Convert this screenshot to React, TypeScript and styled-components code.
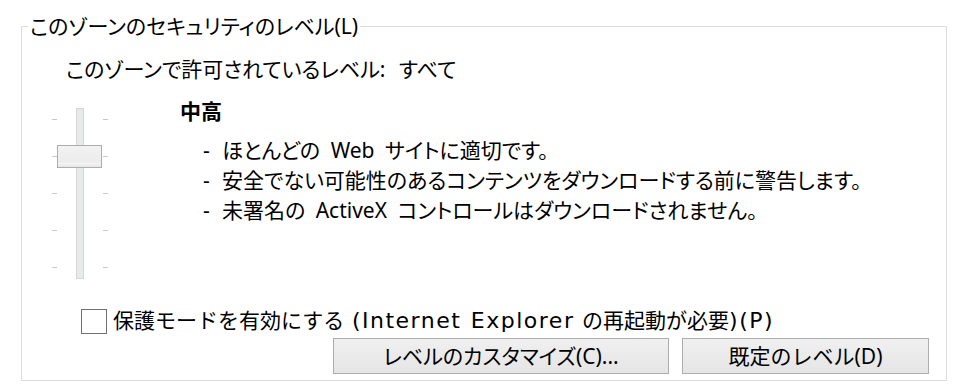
import React from "react";
import styled, { createGlobalStyle } from "styled-components";

const Global = createGlobalStyle`
  html, body { margin: 0; padding: 0; background: #ffffff; }
  body {
    font-family: "Noto Sans", "Noto Sans CJK JP", sans-serif;
    font-size: 21px;
    font-feature-settings: "palt";
    word-spacing: 5px;
    color: #000;
  }
`;

const Page = styled.div`
  width: 956px;
  height: 385px;
  padding-top: 12px;
  box-sizing: border-box;
`;

const Group = styled.fieldset`
  margin: 0 9px 0 21px;
  padding: 0 17px 6px 0;
  border: 1px solid #dcdcdc;
  min-inline-size: 0;
  height: 369px;
  box-sizing: border-box;
  display: flex;
  flex-direction: column;
`;

const Legend = styled.legend`
  margin-left: 6px;
  padding: 0 2px;
  line-height: 28px;
`;

const AllowedText = styled.div`
  margin: 14px 0 0 44px;
  line-height: 30px;
  word-spacing: 8px;
`;

const Main = styled.div`
  display: flex;
  align-items: flex-start;
`;

const SliderBox = styled.div`
  position: relative;
  margin: 24px 0 0 30px;
  width: 56px;
  height: 171px;
  display: flex;
  justify-content: space-between;
`;

const TickColumn = styled.div`
  display: flex;
  flex-direction: column;
  justify-content: space-between;
  padding: 11px 0;
  width: 5px;
`;

const Tick = styled.span`
  display: block;
  width: 5px;
  height: 1px;
  background: #c8c8c8;
`;

const Track = styled.div`
  width: 8px;
  height: 171px;
  box-sizing: border-box;
  border: 1px solid #d6d6d6;
  background: #e7eaea;
`;

const Thumb = styled.div<{ $top: number }>`
  position: absolute;
  left: 5px;
  top: ${(p) => p.$top}px;
  width: 45px;
  height: 23px;
  box-sizing: border-box;
  border: 1px solid #adadad;
  background: linear-gradient(#f2f2f2 0%, #ececec 78%, #f6f6f6 80%, #e6e6e6 100%);
`;

const Desc = styled.div`
  margin: 12px 0 0 72px;
  display: flex;
  flex-direction: column;
`;

const LevelName = styled.div`
  font-weight: 700;
  line-height: 30px;
`;

const Bullets = styled.ul`
  list-style: none;
  margin: 9px 0 0 23px;
  padding: 0;
`;

const Bullet = styled.li`
  display: flex;
  line-height: 30px;
  white-space: nowrap;
`;

const Dash = styled.span`
  width: 19px;
  flex: none;
`;

const CheckRow = styled.label`
  display: flex;
  align-items: center;
  margin: 27px 0 0 59px;
  line-height: 30px;
  gap: 6px;
  white-space: nowrap;
`;

const CheckText = styled.span`
  font-family: "DejaVu Sans", "Noto Sans CJK JP", sans-serif;
  font-feature-settings: normal;
  word-spacing: 1px;
`;

const Latin = styled.span`
  font-size: 22px;
  letter-spacing: 1.5px;
`;

const Box = styled.span`
  width: 26px;
  height: 25px;
  box-sizing: border-box;
  border: 1px solid #707070;
  background: #fff;
  flex: none;
`;

const ButtonRow = styled.div`
  display: flex;
  justify-content: flex-end;
  gap: 13px;
  margin-top: 2px;
`;

const Button = styled.button<{ $w: number; $wide?: boolean }>`
  width: ${(p) => p.$w}px;
  height: 36px;
  box-sizing: border-box;
  border: 1px solid #adadad;
  background: linear-gradient(#f0f0f0, #e5e5e5);
  font-family: inherit;
  font-size: 21px;
  font-feature-settings: ${(p) => (p.$wide ? "normal" : '"palt"')};
  color: #000;
  padding: 0;
  line-height: 34px;
`;

const ticks = [0, 1, 2, 3, 4];

function Slider({ index }: { index: number }) {
  return (
    <SliderBox>
      <TickColumn>
        {ticks.map((t) => (
          <Tick key={t} />
        ))}
      </TickColumn>
      <Track />
      <TickColumn>
        {ticks.map((t) => (
          <Tick key={t} />
        ))}
      </TickColumn>
      <Thumb $top={index * 37} />
    </SliderBox>
  );
}

const bullets = [
  "ほとんどの Web サイトに適切です。",
  "安全でない可能性のあるコンテンツをダウンロードする前に警告します。",
  "未署名の ActiveX コントロールはダウンロードされません。",
];

export default function App() {
  return (
    <Page>
      <Global />
      <Group>
        <Legend>このゾーンのセキュリティのレベル(L)</Legend>
        <AllowedText>このゾーンで許可されているレベル: すべて</AllowedText>
        <Main>
          <Slider index={1} />
          <Desc>
            <LevelName>中高</LevelName>
            <Bullets>
              {bullets.map((b) => (
                <Bullet key={b}>
                  <Dash>-</Dash>
                  <span>{b}</span>
                </Bullet>
              ))}
            </Bullets>
          </Desc>
        </Main>
        <CheckRow>
          <Box />
          <CheckText>
            保護モードを有効にする <Latin>(Internet Explorer</Latin> の再起動が必要<Latin>)(P)</Latin>
          </CheckText>
        </CheckRow>
        <ButtonRow>
          <Button $w={336}>レベルのカスタマイズ(C)...</Button>
          <Button $w={247} $wide>
            既定のレベル(D)
          </Button>
        </ButtonRow>
      </Group>
    </Page>
  );
}
